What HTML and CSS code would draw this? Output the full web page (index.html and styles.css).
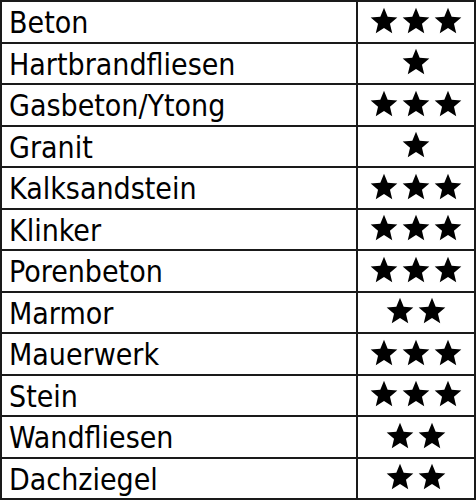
FILE: index.html
```html
<!DOCTYPE html>
<html lang="de">
<head>
<meta charset="utf-8">
<link rel="stylesheet" href="styles.css">
</head>
<body>
<svg width="0" height="0" class="defs">
  <defs>
    <symbol id="star" viewBox="0 0 25 24">
      <polygon points="12.5,0.7 15.79,8.67 24.39,9.34 17.83,14.93 19.85,23.31 12.5,18.8 5.15,23.31 7.17,14.93 0.61,9.34 9.21,8.67"/>
    </symbol>
  </defs>
</svg>
<div class="grid">
  <div class="name">Beton</div><div class="rate"><svg><use href="#star"/></svg><svg><use href="#star"/></svg><svg><use href="#star"/></svg></div>
  <div class="name">Hartbrandfliesen</div><div class="rate"><svg><use href="#star"/></svg></div>
  <div class="name">Gasbeton/Ytong</div><div class="rate"><svg><use href="#star"/></svg><svg><use href="#star"/></svg><svg><use href="#star"/></svg></div>
  <div class="name">Granit</div><div class="rate"><svg><use href="#star"/></svg></div>
  <div class="name">Kalksandstein</div><div class="rate"><svg><use href="#star"/></svg><svg><use href="#star"/></svg><svg><use href="#star"/></svg></div>
  <div class="name">Klinker</div><div class="rate"><svg><use href="#star"/></svg><svg><use href="#star"/></svg><svg><use href="#star"/></svg></div>
  <div class="name">Porenbeton</div><div class="rate"><svg><use href="#star"/></svg><svg><use href="#star"/></svg><svg><use href="#star"/></svg></div>
  <div class="name">Marmor</div><div class="rate"><svg><use href="#star"/></svg><svg><use href="#star"/></svg></div>
  <div class="name">Mauerwerk</div><div class="rate"><svg><use href="#star"/></svg><svg><use href="#star"/></svg><svg><use href="#star"/></svg></div>
  <div class="name">Stein</div><div class="rate"><svg><use href="#star"/></svg><svg><use href="#star"/></svg><svg><use href="#star"/></svg></div>
  <div class="name">Wandfliesen</div><div class="rate"><svg><use href="#star"/></svg><svg><use href="#star"/></svg></div>
  <div class="name">Dachziegel</div><div class="rate"><svg><use href="#star"/></svg><svg><use href="#star"/></svg></div>
</div>
</body>
</html>
```
FILE: styles.css
```css
html, body {
  margin: 0;
  padding: 0;
  background: #fff;
}
.defs {
  position: absolute;
  width: 0;
  height: 0;
}
.grid {
  box-sizing: border-box;
  width: 476px;
  height: 500px;
  display: grid;
  grid-template-columns: 356px 1fr;
  grid-template-rows: repeat(12, 1fr);
  border-left: 2px solid #1a1a1a;
  border-top: 2px solid #1a1a1a;
  font-family: "DejaVu Sans Condensed", "Liberation Sans", sans-serif;
  font-stretch: condensed;
  font-size: 30px;
  color: #000;
}
.name, .rate {
  box-sizing: border-box;
  border-right: 2px solid #1a1a1a;
  border-bottom: 2px solid #1a1a1a;
  display: flex;
  align-items: center;
  line-height: 1;
}
.name {
  padding-left: 7px;
  padding-top: 3px;
}
.rate {
  justify-content: center;
  gap: 4px;
  padding-bottom: 3px;
}
.rate svg {
  width: 28px;
  height: 27px;
  fill: #000;
  display: block;
}
```
